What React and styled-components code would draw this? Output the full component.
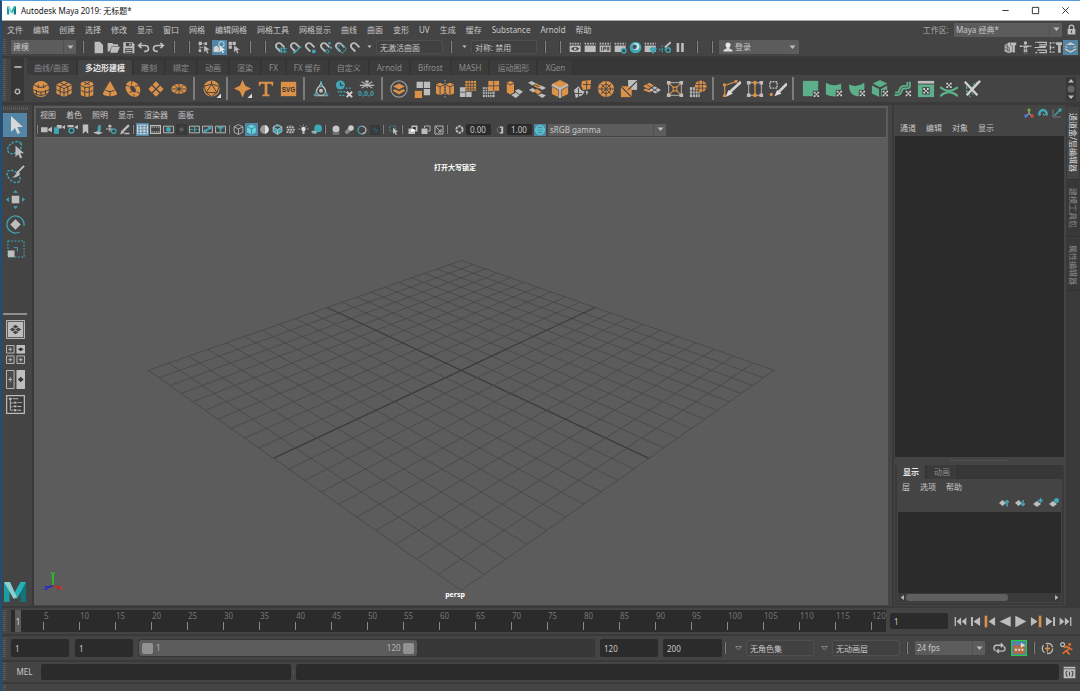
import React from "react";
import styled, { createGlobalStyle, css } from "styled-components";

const G = "#bdbdbd";
const T = "#3fa7b5";
const O = "#dc9148";
const N = "#5caf89";
const D = "#2b2b2b";
const BG = "#444444";
const BLUE = "#5285a6";

const GlobalStyle = createGlobalStyle`
  * { box-sizing: border-box; }
  body { margin: 0; background: ${BG}; }
  body, button, input, select {
    font-family: "Noto Sans", "Noto Sans CJK SC", sans-serif;
    font-size: 8px;
    line-height: 12px;
    color: #c8c8c8;
  }
  button { border: 0; padding: 0; margin: 0; background: none; cursor: default; }
  svg { display: block; }
`;

/* ---------- layout parts ---------- */

const Window = styled.div`
  min-height: 100vh;
  display: flex;
  flex-direction: column;
  background: ${BG};
  border-top: 1px solid #559fdd;
  border-left: 2px solid #1f4f78;
`;
const TitleBar = styled.header`
  display: flex;
  align-items: center;
  height: 20px;
  padding-left: 5px;
  background: #fff;
  border-bottom: 1px solid #a9a9a9;
`;
const Title = styled.h1`
  flex: 1;
  margin: 0 0 0 5px;
  font-size: 8px;
  line-height: 18px;
  font-weight: 400;
  color: #111;
`;
const WindowButton = styled.button`
  width: 30px;
  height: 18px;
  display: grid;
  place-items: center;
`;
const Bar = styled.div`
  display: flex;
  align-items: center;
  flex: none;
  height: ${(p) => p.$h}px;
  padding-right: ${(p) => p.$pr || 0}px;
  border-bottom: ${(p) => (p.$line ? "2px solid #3a3a3a" : "0")};
`;
const Spacer = styled.div`
  flex: 1;
`;
const MenuList = styled.nav`
  display: flex;
  gap: 10px;
  padding-left: ${(p) => p.$pl}px;
`;
const MenuButton = styled.button`
  white-space: nowrap;
`;
const Grip = styled.div`
  flex: none;
  align-self: center;
  width: 3px;
  height: ${(p) => p.$h || 18}px;
  margin: 0 5px 0 1px;
  background: repeating-linear-gradient(#5a5a5a 0 1px, transparent 1px 2px);
`;
const Group = styled.div`
  display: flex;
  align-items: center;
  flex: none;
  margin-left: ${(p) => p.$ml || 0}px;
`;
const Sep = styled.span`
  flex: none;
  width: 3px;
  height: ${(p) => p.$h || 12}px;
  margin-left: ${(p) => p.$ml || 0}px;
  border-left: 1px solid #3a3a3a;
  background: linear-gradient(90deg, #828282 50%, transparent 50%);
`;
const ShelfSep = styled.span`
  flex: none;
  width: 2px;
  height: 23px;
  margin: 0 3px;
  background: #7c7c7c;
`;
const IconButton = styled.button`
  flex: none;
  display: grid;
  place-items: center;
  width: ${(p) => p.$w || 15}px;
  height: ${(p) => p.$h || p.$w || 15}px;
  background: ${(p) => (p.$active ? BLUE : "none")};
  ${(p) => p.$outlined && css`border: 1px solid #1fd03f;`}
`;
const SelectBox = styled.div`
  display: flex;
  align-items: center;
  flex: none;
  width: ${(p) => p.$w}px;
  height: ${(p) => p.$h || 14}px;
  margin-left: ${(p) => p.$ml || 0}px;
  padding-left: 2px;
  background: #5c5c5c;
  border-radius: 1px;
  & > select {
    flex: 1;
    min-width: 0;
    appearance: none;
    border: 0;
    padding: 0;
    background: none;
    outline: 0;
  }
`;
const CaretCell = styled.span`
  display: grid;
  place-items: center;
  align-self: stretch;
  width: 13px;
  border-left: ${(p) => (p.$plain ? "0" : "1px solid #505050")};
`;
const Field = styled.input`
  flex: ${(p) => (p.$grow ? "1" : "none")};
  min-width: 0;
  width: ${(p) => p.$w}px;
  height: ${(p) => p.$h || 16}px;
  margin: 0 0 0 ${(p) => p.$ml || 0}px;
  padding: 0 3px;
  border: 1px solid ${(p) => (p.$flat ? "#4f4f4f" : D)};
  border-radius: 2px;
  background: ${(p) => (p.$flat ? "#414141" : D)};
  outline: 0;
`;
const Label = styled.label`
  color: #a8a8a8;
`;

/* ---------- shelf ---------- */

const Shelf = styled.section`
  display: flex;
  flex: none;
  height: 47px;
  border-bottom: 3px solid #3a3a3a;
`;
const ShelfSide = styled.div`
  display: flex;
  flex-direction: column;
  justify-content: space-between;
  align-items: center;
  width: 13px;
  height: 43px;
  padding: 5px 0 6px;
  margin-right: 3px;
  background: #373737;
`;
const ShelfBody = styled.div`
  flex: 1;
  min-width: 0;
`;
const TabStrip = styled.div`
  display: flex;
  height: ${(p) => p.$h}px;
  padding-top: ${(p) => p.$pt || 0}px;
  background: #373737;
`;
const Tab = styled.button`
  flex: none;
  padding: 0 ${(p) => (p.$tight ? 6 : 7)}px;
  margin-right: 1px;
  border-right: 1px solid #333;
  white-space: nowrap;
  color: ${(p) => (p.$active ? "#e6e6e6" : "#8c8c8c")};
  font-weight: ${(p) => (p.$active ? 700 : 400)};
  background: ${(p) => (p.$active ? BG : "#3b3b3b")};
`;
const ShelfRow = styled.div`
  display: flex;
  align-items: center;
  height: 27px;
`;
const ShelfScroll = styled.div`
  display: grid;
  place-items: center;
  width: 10px;
  height: 24px;
  margin-right: 4px;
  background: #383838;
`;

/* ---------- work area ---------- */

const Work = styled.main`
  display: flex;
  flex: 1;
  min-height: 0;
`;
const ToolBox = styled.aside`
  display: flex;
  flex-direction: column;
  align-items: center;
  width: 32px;
  padding: 2px 4px 3px 0;
  border-right: 2px solid #393939;
`;
const DotHandle = styled.div`
  flex: none;
  width: ${(p) => p.$w}px;
  height: ${(p) => p.$h}px;
  margin: ${(p) => p.$m || "0"};
  background: repeating-linear-gradient(90deg, #5c5c5c 0 1px, transparent 1px 2px);
`;
const ToolSet = styled.div`
  display: flex;
  flex-direction: column;
  align-items: center;
  margin-top: ${(p) => p.$mt}px;
`;
const Rule = styled.div`
  width: 24px;
  height: 2px;
  margin-top: 51px;
  background: #8f8f8f;
`;
const ViewPanel = styled.section`
  display: flex;
  flex-direction: column;
  flex: 1;
  min-width: 0;
  margin: 1px 4px 1px 0;
  border: 2px solid #5c5c5c;
  border-bottom-width: 1px;
`;
const Canvas = styled.div`
  position: relative;
  flex: 1;
  min-height: 0;
  background: #5c5c5c;
  border-top: 1px solid #666;
  overflow: hidden;
`;
const Scene = styled.svg`
  position: absolute;
  inset: 0;
  width: 100%;
  height: 100%;
`;
const Hud = styled.p`
  position: absolute;
  left: 0;
  right: 12px;
  ${(p) => p.$at}: ${(p) => p.$y}px;
  margin: 0;
  text-align: center;
  font-size: 7px;
  line-height: 10px;
  font-weight: 700;
  color: #fff;
`;
const SidePanel = styled.aside`
  display: flex;
  flex-direction: column;
  width: 174px;
  padding: 0 2px 0 1px;
  border-left: 2px solid #3a3a3a;
`;
const ChannelArea = styled.div`
  flex: 1;
  min-height: 0;
  background: ${D};
`;
const LayerBox = styled.div`
  display: flex;
  flex-direction: column;
  height: 140px;
  margin-bottom: 1px;
  border: 2px solid #3a3a3a;
  border-top: 0;
`;
const LayerList = styled.div`
  flex: 1;
  margin: 0 1px 0 1px;
  background: ${D};
`;
const ScrollBar = styled.div`
  display: flex;
  align-items: center;
  height: 9px;
  margin: 0 1px 1px 1px;
  padding: 0 1px;
  background: #3a3a3a;
`;
const ScrollThumb = styled.div`
  width: 102px;
  height: 7px;
  border-radius: 3px;
  background: #5f5f5f;
`;
const SideTabs = styled.div`
  display: flex;
  flex-direction: column;
  gap: 2px;
  width: 14px;
  padding: 2px 1px 0 1px;
  background: #3a3a3a;
`;
const SideTab = styled.button`
  writing-mode: vertical-rl;
  text-orientation: sideways;
  height: ${(p) => p.$h}px;
  padding: 6px 0;
  text-align: left;
  white-space: nowrap;
  color: ${(p) => (p.$active ? "#dcdcdc" : "#8c8c8c")};
  background: ${(p) => (p.$active ? BG : "#383838")};
  border-bottom: 1px solid #303030;
`;

/* ---------- bottom bars ---------- */

const Bottom = styled.footer`
  flex: none;
  display: flex;
  flex-direction: column;
  border-top: 2px solid #3a3a3a;
`;
const Track = styled.div`
  position: relative;
  display: flex;
  flex: 1;
  height: 22px;
  padding-left: 32px;
  background: ${D};
  overflow: hidden;
`;
const Tick = styled.div`
  flex: ${(p) => (p.$last ? "none" : "1")};
  width: ${(p) => (p.$last ? "15px" : "auto")};
  min-width: 0;
  color: #747474;
  line-height: 11px;
  padding-left: 1px;
  background: linear-gradient(#8a8a8a, #8a8a8a) 0 100% / 1px 8px no-repeat;
  border-bottom: 2px solid ${D};
`;
const Playhead = styled.output`
  position: absolute;
  left: 4px;
  top: 0;
  width: 6px;
  height: 22px;
  line-height: 24px;
  text-align: center;
  color: #d8d8d8;
  background: #5a5a5a;
`;
const RangeTrack = styled.div`
  display: flex;
  flex: 1;
  height: 18px;
  margin-left: 5px;
  padding: 1px;
  background: #373737;
  border-radius: 2px;
`;
const RangeSpan = styled.div`
  position: relative;
  display: flex;
  align-items: center;
  justify-content: space-between;
  width: 61%;
  padding: 0 16px 0 17px;
  border-radius: 3px;
  background: #5c5c5c;
  color: #b4b4b4;
`;
const thumb = css`
  appearance: none;
  pointer-events: auto;
  width: 11px;
  height: 11px;
  border: 0;
  border-radius: 2px;
  background: #929292;
`;
const RangeInput = styled.input`
  position: absolute;
  inset: 0 3px;
  width: calc(100% - 6px);
  height: 16px;
  margin: 0;
  appearance: none;
  background: none;
  pointer-events: none;
  &::-webkit-slider-thumb { ${thumb} }
`;
const Mel = styled.button`
  width: 30px;
  padding-right: 3px;
  text-align: center;
`;
const CommandDivider = styled.div`
  width: 5px;
  height: 6px;
  border-right: 2px solid ${BG};
  background: #555;
  border-left: 2px solid ${BG};
`;

/* ---------- drawings ---------- */

const checker = (x, y) => (
  <g>
    <path fill="#404040" d={`M${x - 1} ${y - 1}h8v8h-8z`} />
    <path fill="#d8d8d8" d={`M${x} ${y}h2v2h-2zM${x + 4} ${y}h2v2h-2zM${x + 2} ${y + 2}h2v2h-2zM${x} ${y + 4}h2v2h-2zM${x + 4} ${y + 4}h2v2h-2z`} />
  </g>
);
const clapper = (
  <>
    <path fill={G} d="M1 7h17v10H1z" />
    <path fill="none" stroke={G} strokeWidth="2.600" strokeDasharray="2.400 1.600" d="M1 4h17" />
  </>
);
const magnet = (
  <path
    fill="none"
    stroke={G}
    strokeWidth="2.800"
    transform="rotate(-45 8 8)"
    d="M3.500 15V7.500a4.500 4.500 0 019 0V15"
  />
);
const screen = <path fill="none" stroke={G} strokeWidth="1.700" d="M1 4h18v12H1z" />;
const pointer = <path fill={G} stroke="#3a3a3a" strokeWidth=".6" d="M9 6v12l3-3 2 4.500 2.500-1-2-4.500H19z" />;

const DRAW = {
  newFile: <path fill={G} d="M4 1h8l5 5v13H4z" />,
  open: <path fill={G} d="M1 3h7l2 2h7v3H7l-3 8H1zM7 9h13l-4 9H5z" />,
  save: (
    <>
      <path fill={G} d="M2 2h14l3 3v14H2z" />
      <path fill={BG} d="M6 3h9v5H6zM5 11h11v7H5z" />
      <path fill={G} d="M6 12.500h9v1.500H6zM6 15.500h9V17H6zM11 4h2.500v3H11z" />
    </>
  ),
  undo: <path fill="none" stroke={G} strokeWidth="2.400" d="M7 3L2.500 7l4.500 4M3 7h9c7 0 8 8 1 9h-2" />,
  redo: <path fill="none" stroke={G} strokeWidth="2.400" d="M13 3l4.500 4-4.500 4M17 7H8c-7 0-8 8-1 9h2" />,
  selHier: (
    <>
      <path fill={G} d="M1 1h5v5H1zM1 13h4v4H1zM10 2h4v4h-4z" />
      <path fill="none" stroke={G} d="M3 6v8M6 4h4M3 10h5" />
      {pointer}
    </>
  ),
  selObj: (
    <>
      <path fill="#d5d5d5" d="M1 10l4-3 4 3v7H1z" />
      <circle cx="13" cy="5" r="4" fill="none" stroke="#9fc4d4" strokeWidth="2" />
      <path fill="#e6e6e6" d="M10 7v11l3-3 2 4 2-1-2-4h4z" />
    </>
  ),
  selComp: (
    <>
      <path fill={G} d="M1 1h5v5H1zM7 1h5v5H7zM1 7h5v5H1z" />
      {pointer}
    </>
  ),
  magGrid: <>{magnet}<path stroke={T} strokeWidth="1.500" d="M11.500 9v10M16 9v10M8 12h12M8 16.500h12" /></>,
  magCurve: <>{magnet}<path fill="none" stroke={T} strokeWidth="2.200" d="M6 18c8 0 5-7 13-9" /></>,
  magPoint: <>{magnet}<circle cx="15" cy="16" r="3" fill={T} /></>,
  magCenter: <>{magnet}<circle cx="13" cy="16" r="2.500" fill="none" stroke={T} strokeWidth="1.500" /><path fill={T} d="M14 2h4v3h-4zM17 9h3v3h-3z" /></>,
  magPlane: <>{magnet}<path fill="none" stroke={T} strokeWidth="1.500" d="M4 11l7-7 8 8-6 7z" /></>,
  magLive: magnet,
  clapEye: <>{clapper}<path fill={BG} d="M3 12q6.500-6 13 0-6.500 6-13 0z" /><circle cx="9.500" cy="12" r="2" fill={G} /></>,
  clap: clapper,
  clapIpr: <>{clapper}<path fill="none" stroke={BG} strokeWidth="1.400" d="M4 9v6M7 15V9.500h3v2.500H7M12.500 15V9.500h3V12h-3M14 12l1.500 3" /></>,
  clapGear: <>{clapper}<circle cx="15" cy="15" r="3.500" fill={BG} stroke={T} strokeWidth="2.200" /></>,
  ball: <><circle cx="10" cy="10" r="9" fill={T} /><circle cx="10.500" cy="8.500" r="5.500" fill="#c9dfe3" /><circle cx="8.500" cy="9" r="3.500" fill="#325a66" /></>,
  clapTeal: <>{clapper}<path fill={T} d="M8 12l6-3 6 3-6 8z" /></>,
  paintGear: <><path stroke={G} strokeWidth="3" d="M9 10l9-8" /><path stroke={T} strokeWidth="2.200" strokeDasharray="2 2" d="M0 13h9M5 7v12" /><circle cx="14" cy="14" r="3.500" fill="none" stroke={T} strokeWidth="2.200" /></>,
  pause: <path fill={G} d="M4 3h4v14H4zM11 3h4v14h-4z" />,
  user: <><circle cx="10" cy="6" r="5" fill="#e8e8e8" /><path fill="#dcdcdc" d="M7 10h6v3l6 3v3H1v-3l6-3z" /></>,
  lock: <><path fill="none" stroke={G} strokeWidth="2.500" d="M6 9V6a4 4 0 018 0v3" /><path fill={G} d="M3 9h14v10H3z" /><path fill={BG} d="M9 12h2v4H9z" /></>,
  cubePlus: <><path fill={G} d="M1 6l7-4 6 2v12l-6 3-7-3z" /><path stroke={BG} d="M1 7l7 3v8M5 4v12M1 11.500l7 3" fill="none" /><path fill={G} stroke={BG} strokeWidth=".7" d="M10 2h9v5h-2v11h-4V7h-3z" /></>,
  human: <><circle cx="10" cy="3" r="2.600" fill={G} /><path fill="none" stroke={G} strokeWidth="2.400" d="M1 8h18M8.500 7v12M11.500 7v12" strokeDasharray="4.500 1" /></>,
  attrs: <path fill="none" stroke={G} strokeWidth="1.800" d="M5 2h14v4H8M1 10h17M8 8.500h11M5 14h14v4H8M2 2h2M2 18h3" />,
  toolset: <><path fill="none" stroke={G} strokeWidth="2" strokeDasharray="3 1.500" d="M1 3h10M1 10h8M1 17h8M2 2v16" /><path fill={G} d="M11 2h9v4h-2v12h-4V6h-3z" /></>,
  layersOn: <path fill="#c2c8cc" stroke="#4c6f85" d="M10 1l9 5v8l-9 5-9-5V6zM1 6l9 5 9-5M1 10l9 5 9-5" />,

  minus: <path fill={G} d="M1 8h18v4H1z" />,
  gear: <circle cx="10" cy="10" r="6.500" fill="none" stroke={G} strokeWidth="4.500" strokeDasharray="6 .8" />,
  sphere: <><circle cx="10" cy="10" r="9" fill={O} /><path fill="none" stroke={BG} strokeWidth="1.100" d="M2.500 5.500q7.500 5.500 15 0M1 10.500q9 6 18 0M3 15q7 4 14 0M7 5v4M13 5v4M5 11v5M10 13v4M15 11v5" /></>,
  cube: <><path fill={O} d="M10 1l8.500 4v10L10 19l-8.500-4V5z" /><path fill="none" stroke={BG} strokeWidth="1.100" d="M1.500 5.500l8.500 4 8.500-4M10 9.500V19M1.500 10.500l8.500 4 8.500-4M5.800 3l8.500 4.300v10M14.200 3L5.700 7.300v10" /></>,
  cylinder: <><path fill={O} d="M3 4.500C3 .5 17 .5 17 4.500v11c0 4-14 4-14 0z" /><path fill="none" stroke={BG} strokeWidth="1.100" d="M3 5.500c2 3.500 12 3.500 14 0M3 11c2 3.500 12 3.500 14 0M7.500 8v11M12.500 8v11M7 2.500l6 3M13 2.500l-6 3" /></>,
  cone: <><path fill={O} d="M10 1l8 14c-1 4-15 4-16 0z" /><path fill="none" stroke={BG} strokeWidth="1.100" d="M5 11.500q5 3 10 0M10 12.500v6.500" /></>,
  torus: <><ellipse cx="10" cy="10" rx="5" ry="7" transform="rotate(-35 10 10)" fill="none" stroke={O} strokeWidth="5" /><path stroke={BG} strokeWidth="1" d="M2 6l4 1M6 14l4-2M9 1l-1 4M12 7l5-1M14 13l4 2M11 16v3" /></>,
  plane: <><path fill={O} d="M10 1.500l8.500 8.500-8.500 8.500L1.500 10z" /><path stroke={BG} strokeWidth="1.400" d="M5.500 5.500l9 9M14.500 5.500l-9 9" /></>,
  disc: <><ellipse cx="10" cy="10" rx="8.500" ry="5.500" fill={O} /><path stroke={BG} strokeWidth="1" d="M5 6l10 8M15 6L5 14M10 4v12M2 10h16" /><circle cx="10" cy="10" r="1.500" fill={BG} /></>,
  platonic: <><circle cx="9.500" cy="9.500" r="9" fill={O} /><path fill="none" stroke={BG} strokeWidth="1.100" d="M9.500 1v3.500M3.500 14L9.500 4.500 15.500 14zM3.500 14L1 7l8.500-2.500L18 7l-2.500 7M3.500 14l6 4.500 6-4.500" /><path fill="#ddd" d="M20 15v5h-5z" /></>,
  star: <><path fill={O} d="M9.500 0l3 6.500L19 9.500l-6.500 3-3 7-3-7L0 9.500l6.500-3z" /><path fill="#ddd" d="M20 15v5h-5z" /></>,
  type: <path fill={O} d="M2 2h16v4.500h-1.500l-.8-2.300H11.500v11.600l2.500.6V18H6v-1.600l2.500-.6V4.200H4.300L3.500 6.500H2z" />,
  svgIcon: <path fill={O} d="M1 2h17v16H1z" />,
  ctrl: <><circle cx="10" cy="12" r="5" fill="none" stroke={G} strokeWidth="1.300" /><circle cx="10" cy="12" r="2.200" fill={G} /><path stroke={T} strokeWidth="1.700" fill="none" d="M10 1v7M6 14l-4 3M14 14l4 3" /><path stroke={G} fill="none" d="M3 17.500h14M10 3L4 14M10 3l6 11" /></>,
  history: <><circle cx="6" cy="5.500" r="5" fill={T} /><path stroke={BG} strokeWidth="1.200" fill="none" d="M6 2.500v3.500h3" /><path stroke={T} strokeWidth="1.500" strokeDasharray="2 1.500" d="M12 9h7M6 13h6M3 13h2M5 17h6" /><path stroke="#d0d0d0" strokeWidth="2.200" d="M13 13l6 6M19 13l-6 6" /></>,
  freeze: <path stroke={G} strokeWidth="1.200" fill="none" d="M10 0v9M4 2l12 7M16 2L4 9M2 6h16M8 1l2 2 2-2" />,
  combineC: <><circle cx="10" cy="10" r="9" fill="none" stroke="#999" strokeWidth="1.300" /><path fill={O} d="M10 4l6.500 3.200L10 10.500 3.500 7.200z" /><path fill={O} d="M3.500 11l2-.8L10 12.400l4.500-2.200 2 .8v1.200L10 16l-6.500-3.800z" /></>,
  combine: <><path fill={G} d="M4 2h7v7H4zM12 2h7v7h-7zM12 10h7v7h-7z" /><path fill={O} d="M2 12h8v8H2z" /></>,
  mirror: <><path fill={O} d="M0 5l4.500-2L9 5v10l-4.500 2L0 15zM11 5l4.500-2L20 5v10l-4.500 2-4.500-2z" /><path stroke={BG} fill="none" d="M0 5.500l4.500 2 4.500-2M4.500 7.500V17M11 5.500l4.500 2 4.500-2M15.500 7.500V17" /><path stroke={G} strokeDasharray="1.500 1.500" d="M10 0v20" /></>,
  smooth: <><path fill={G} d="M1 8h6v5h7v6H1z" /><path fill={O} d="M7 1h12v11H7z" /><path stroke={BG} strokeWidth=".8" d="M1 13.500h6M7.500 13v6M10 1v11M13 1v11M16 1v11M7 4h12M7 7h12M7 10h12" /></>,
  reduce: <><path fill={G} d="M1 8h13v11H1z" /><path fill={O} d="M7 1h12v11H7z" /><path stroke={BG} strokeWidth=".9" d="M3.500 8v11M6 8v11M8.500 12v7M11 12v7M1 10.500h6M1 13h13M1 16h13M13 1v11M7 6.500h12" /></>,
  extrude: <><path fill={O} d="M2 3l4-2 4 2v11l-4 2-4-2z" /><path fill="none" stroke={BG} d="M2 3.500l4 2 4-2" /><path fill={G} d="M7 17l5-3 4 3-4 3zM11 12l4-2 5 3-4 3z" /></>,
  bridge: <><path fill={G} d="M0 3l4-2 5 3-4 2zM11 8l4-2 5 3-4 2zM1 11l4-2 5 3-4 2zM11 17l4-2 5 2-4 3z" /><path fill={O} d="M6 12l4-2 5 3-4 3z" /><path fill="none" stroke={O} strokeWidth="1.500" d="M8 4l6 3M7 6l5 3" /></>,
  bevel: <><path fill={O} d="M10 0l9 4.500v11L10 20l-9-4.500v-11z" /><path fill="none" stroke={G} strokeWidth="2.600" d="M1 5.500l9 4.500 9-4.500M10 10v10" /><path fill="none" stroke={BG} strokeWidth=".7" d="M1 7l7.500 4v8M19 7l-7.500 4v8" /></>,
  scatter: <><path fill={O} d="M9 1l10-1-1 10-8 1-2-5z" /><path fill={G} d="M0 11l5-4 3 4 4 2-3 4-7 3zM13 12l3 1-2 4z" /><path stroke={BG} d="M1 15h8M5 9v10M10 5h8M14 1v9" /></>,
  wheel: <><circle cx="10" cy="10" r="9" fill={O} /><circle cx="10" cy="10" r="5" fill="none" stroke={BG} /><path stroke={BG} d="M10 1v18M1 10h18M4 4l12 12M16 4L4 16" /></>,
  diag: <><path fill={G} d="M9 0h10v11H9z" /><path fill={O} d="M1 7h12v12H1z" /><path stroke={BG} strokeWidth="1.300" d="M1 7l12 12M9 11L19 1" /></>,
  merge: <><path fill={O} d="M0 7l7-4 5 3-6 4zM0 11l3-1.500 4 2 3-1.500 2 1-5 3z" /><path fill={G} d="M7 11l6-4 7 4-6 4z" /><path stroke={BG} d="M4 5l6 4M10 13l6-4M10 9l6 4" /></>,
  target: <><path stroke={G} fill="none" d="M3 3h14v14H3z" /><path fill={G} d="M1 1h4v4H1zM15 1h4v4h-4zM1 15h4v4H1zM15 15h4v4h-4z" /><path stroke={O} strokeWidth="1.200" d="M4 4l12 12M16 4L4 16" /><path fill={BG} stroke={O} strokeWidth="1.300" d="M8 8h4v4H8z" /></>,
  retopo: <><path fill={G} d="M1 8h11v11H1z" /><circle cx="13" cy="7" r="6.500" fill={O} /><path stroke={BG} strokeWidth=".9" d="M4 8v11M7 8v11M10 12v7M1 12h10M1 15.500h11M11 1v12M15 1v12M7 5h12M7 9h12" /></>,
  multicut: <><path fill="none" stroke={O} strokeWidth="1.300" d="M2 18V6l12-4" /><path fill={O} d="M0 4h3v3H0zM13 0h3v3h-3zM0 16h3v3H0z" /><path stroke="#d0d0d0" strokeWidth="3" d="M8 13L20 2" /><path fill="#ddd" d="M3 19l3-8 5 4z" /></>,
  loop: <><path fill="none" stroke={G} d="M3 3h14v14H3z" /><path fill={G} d="M1 1h4v4H1zM15 1h4v4h-4zM1 15h4v4H1zM15 15h4v4h-4z" /><path stroke={O} strokeWidth="1.500" d="M10 2v16" /><circle cx="10" cy="3" r="2.300" fill={O} /><circle cx="10" cy="17" r="2.300" fill={O} /></>,
  quad: <><path fill="none" stroke={G} strokeWidth="1.600" strokeDasharray="2 1" d="M1 2h8v7H1z" /><path stroke="#d0d0d0" strokeWidth="3" d="M11 13L20 4" /><path fill="#ddd" d="M6 18l3-7 5 4z" /><circle cx="2.500" cy="16" r="1.800" fill={O} /></>,
  uvPlane: <><path fill={N} d="M1 1h17v17H1z" />{checker(13, 13)}</>,
  uvCyl: <><path fill={N} d="M1 3q9 5 17 1v13q-8 3-17-1z" />{checker(13, 12)}</>,
  uvSph: <><path fill={N} d="M1 5q9 4 17-2 2 14-8 15-9-1-9-13z" />{checker(13, 12)}</>,
  uvAuto: <><path fill={N} d="M10 0l8 4-8 4-8-4zM1 6l8 4v9l-8-4zM11 10l7-4v9l-7 4z" />{checker(13, 12)}</>,
  uvContour: <><path fill="none" stroke={N} strokeWidth="5" d="M1 15c9 2 4-7 10-7s6 0 5-6" /><path fill="none" stroke={BG} strokeWidth=".9" d="M1 15c9 2 4-7 10-7s6 0 5-6" />{checker(13, 12)}</>,
  uvEditor: <><path fill={G} d="M1 1h18v3H1z" /><path fill={N} d="M1 5h18v14H1z" />{checker(7, 9)}</>,
  uvUnfold: <><path fill="none" stroke={N} strokeWidth="2.400" d="M0 8q10 8 20 0M0 18q10-9 20 0" />{checker(7, 3)}</>,
  uvCut: <><path fill="none" stroke={N} strokeWidth="1.500" d="M4 3v9l4 7M17 2q-10 4-6 14" strokeDasharray="3 1" /><path stroke="#d0d0d0" strokeWidth="2.600" d="M2 2l14 15M19 1L4 17" /></>,
  scroll: <><path fill={G} d="M10 0l6 7H4zM10 40l6-7H4z" /><circle cx="10" cy="20" r="7" fill="#666" /></>,

  arrow: <path fill="#d8d8d8" d="M6 1v16l4-4 2.500 6 2.500-1-2.500-6H18z" />,
  lasso: <><ellipse cx="9" cy="8" rx="8" ry="5.500" transform="rotate(-35 9 8)" fill="none" stroke={T} strokeWidth="1.500" strokeDasharray="2.500 1.500" /><path fill={G} d="M10 6v12l3-3 2 4.500 2-1-2-4.500h4z" /></>,
  paint: <><ellipse cx="8" cy="12" rx="8" ry="5" transform="rotate(42 8 12)" fill="none" stroke={T} strokeWidth="1.500" strokeDasharray="2.500 1.500" /><path stroke={G} strokeWidth="2" d="M12 8l7-7" /><path fill={G} d="M12 6l3 3q-3 5-9 4 4-1 6-7z" /></>,
  move: <><path fill={G} d="M6 6h8v8H6z" /><path fill={T} d="M10 0l2.500 3h-5zM10 20l2.500-3h-5zM0 10l3-2.500v5zM20 10l-3-2.500v5z" /></>,
  rotate: <><circle cx="10" cy="10" r="9" fill="none" stroke={T} strokeWidth="1.300" strokeDasharray="14 8 35" transform="rotate(-80 10 10)" /><path fill={G} d="M10 4.500l5.500 5.500-5.500 5.500L4.500 10z" /></>,
  scale: <><path fill="none" stroke={T} strokeWidth="1.100" strokeDasharray="2 1.500" d="M2 1h17v17H2z" /><path fill="none" stroke={T} d="M8 8h4v4" /><path fill={G} d="M2 11h7v7H2z" /></>,
  single: <><path fill="#555" stroke={G} d="M.5.5h19v19H.5z" /><path fill={G} d="M2 2h16v16H2z" /><path fill="#444" d="M10 5l3 2-3 2-3-2zM10 11l3 2-3 2-3-2zM4 10l3-2 3 2-3 2zM10 10l3-2 3 2-3 2z" /></>,
  four: <><path fill="#4a4a4a" stroke={G} d="M.5.500h8v8h-8zM11.500 11.500h8v8h-8zM.5 11.500h8v8h-8z" /><path fill={G} d="M11 0h9v9h-9z" /><path stroke={G} d="M4.500 2.500v4M2.500 4.500h4M4.500 13.500v4M2.500 15.500h4M15.500 13.500v4M13.500 15.500h4" /><path fill="#333" d="M15.500 2.500l3 2-3 2-3-2z" /></>,
  two: <><path fill="#4a4a4a" stroke={G} d="M.5.500h8v19h-8z" /><path fill={G} d="M11 0h9v20h-9z" /><path stroke={G} d="M4.500 7.500v5M2.500 10h4" /><path fill="#333" d="M15.500 7l3 3-3 3-3-3z" /></>,
  outliner: <><path fill="#3a3a3a" stroke={G} strokeWidth="1.300" d="M.7.700h18.600v18.600H.7z" /><path fill={G} d="M3 3h3v2H3zM7 3.500h6v1H7zM8 7h3v2H8zM12 7.500h5v1h-5zM8 11h3v2H8zM12 11.500h4v1h-4zM8 15h3v2H8zM12 15.500h4v1h-4zM4 5h1v11H4zM5 8h2v1H5zM5 12h2v1H5zM5 15.500h2v1H5z" /></>,
  mayaM: <><path fill="#1d9ea5" d="M0 1h5v18H0z" /><path fill="#11767c" d="M15 1h5v18h-5z" /><path fill="#27b0b5" d="M20 1h-5L8.500 12.500l2 3.500h1.500z" /><path fill="#8ccdd3" d="M0 1h5.500l6 13-1.500 2H8.500z" /></>,

  cam: <path fill={G} d="M0 6h12v9H0zM13 9l7-4v10l-7-3z" />,
  camLock: <><path fill={G} d="M5 2h9v6H5zM15 5l5-3v7l-5-2z" /><path fill={T} d="M0 6h9v12H0z" /></>,
  camBook: <><path fill={G} d="M1 2h11v4H1zM14 5l6-3v7l-6-2z" /><circle cx="8" cy="12" r="4.500" fill="none" stroke={T} strokeWidth="2.500" /></>,
  bookmark: <path fill={G} d="M5 1h10v17l-5-5-5 5z" />,
  imagePlane: <><path fill={T} d="M9 3l5-2v12l-6 4z" /><path fill={G} d="M0 16l8-3 10 3-8 3z" /></>,
  panZoom: <><path stroke={G} strokeWidth="2" fill="none" d="M0 9h12M7 2v12M4 5l3-3 3 3" /><circle cx="14" cy="13" r="4" fill="none" stroke={T} strokeWidth="2.200" /></>,
  pencil: <><path stroke={G} strokeWidth="4" d="M7 13L18 2" /><path fill={G} d="M2 19l3-8 5 5zM10 16h9v2.500h-9z" /></>,
  grid: <path fill="none" stroke="#e0e0e0" strokeWidth="1.600" d="M1 2h18v16H1zM7 2v16M13 2v16M1 7.300h18M1 12.700h18" />,
  film: <><path fill="none" stroke={G} strokeWidth="2" d="M1 3h18v14H1z" /><path stroke={G} strokeWidth="1.500" strokeDasharray="2 2" d="M3 6h14M3 14h14" /></>,
  gateDot: <>{screen}<circle cx="10" cy="10" r="4.500" fill={T} /></>,
  mask: <><path fill="#3a3a3a" d="M0 0h20v20H0z" /><circle cx="10" cy="10" r="4" fill="#5a5a5a" /></>,
  field: <>{screen}<path stroke={T} strokeWidth="2.200" strokeDasharray="5 2" d="M2 10h16M10 4v12" /></>,
  safe: <>{screen}<path fill={T} d="M3 10h6v5H3zM11 5h6v5h-6zM8 8h4v4H8z" /></>,
  safeT: <>{screen}<path fill={T} d="M5 5h10v3h-3.500v7h-3V8H5z" /></>,
  wire: <path fill="none" stroke={G} strokeWidth="1.500" d="M10 1l8 4v10l-8 4-8-4V5zM2 5l8 4 8-4M10 9v10" />,
  shaded: <><path fill="#63d3dc" d="M10 1l8 4v10l-8 4-8-4V5z" /><path fill="none" stroke="#2f7080" strokeWidth="1.300" d="M2 5l8 4 8-4M10 9v10" /></>,
  half: <><path fill="#ddd" d="M10 2a8 8 0 010 16z" /><path fill="#999" d="M10 2a8 8 0 000 16z" /></>,
  textured: <path fill={T} stroke={G} strokeWidth="1.500" d="M10 1l8 4v9l-8 5-8-5V5zM2 5l8 5 8-5M10 10v9" />,
  dots: <><circle cx="10" cy="10" r="8" fill="#666" /><path stroke="#d0d0d0" strokeWidth="2.500" strokeDasharray="2.500 2.500" d="M3 6h14M5 10.500h13M3 15h14" /></>,
  light: <><circle cx="10" cy="9" r="4" fill="#ddd" /><path fill={G} d="M8 13h4v5H8z" /><path stroke={G} strokeWidth="1.500" d="M10 1v2M1 9h3M16 9h3M4 3l2 2M16 3l-2 2" /></>,
  shadow: <><circle cx="13" cy="8" r="7" fill={T} /><path fill="#8fb0b5" d="M0 14q6-4 11 0l-2 4q-6 0-9-4z" /></>,
  ao: <><circle cx="10" cy="8" r="7" fill="#c5c5c5" /><ellipse cx="10" cy="17" rx="8" ry="2.500" fill="#777" /></>,
  blurIcon: <><path fill="#858585" d="M1 14l8-9 6 6-9 8z" /><circle cx="14" cy="6" r="5.500" fill="#ccc" /></>,
  msaa: <><path fill="none" stroke={T} strokeWidth="2.500" d="M10 2a8 8 0 100 16" /><path fill="none" stroke={G} strokeWidth="2.500" d="M10 2q8 2 8 8t-8 8" /></>,
  dof: <><path fill="#383838" d="M0 0h20v20H0z" /><path fill="#2f4f56" d="M5 5h7v5H5zM9 8h7v8H9z" /></>,
  isolate: <><path fill="none" stroke={T} strokeWidth="1.700" strokeDasharray="2 2" d="M1 2h12v10H1z" /><path fill={G} d="M8 5v13l3-3 2.500 5 2.500-1-2.500-5H18z" /></>,
  xray: <><path fill={G} d="M7 1h12v12h-5v5H1V7h6z" /><path fill="#333" d="M9.500 4h6v6h-6z" /><path fill="#fff" d="M6 8h7v5H6z" /></>,
  xray2: <><path fill="none" stroke={G} strokeWidth="1.700" d="M7 6V2h11v10h-4" /><path fill={G} d="M1 7h12v11H1z" /></>,
  xray3: <path fill="none" stroke={G} strokeWidth="1.900" d="M2 2h16v16H2zM4 4l10 10M14 8v6H8" />,
  exposure: <circle cx="10" cy="10" r="7" fill="none" stroke={G} strokeWidth="4.500" strokeDasharray="5.500 1.800" />,
  gamma: <><path fill="none" stroke={G} strokeWidth="1.700" strokeDasharray="3 2" d="M11 2a8 8 0 000 16" /><path fill={G} d="M10 1h8v18h-8v-4h3V5h-3z" /></>,
  colorMgmt: <><path fill={BLUE} d="M0 0h20v20H0z" /><circle cx="10" cy="10" r="7" fill="none" stroke="#55cfd0" strokeWidth="2.500" /><path stroke="#55cfd0" strokeWidth="2" d="M4 8h12M4 12h12" /></>,

  axis: <><path stroke={G} strokeWidth="2" d="M10 5v6l-6 5M10 11l6 5" fill="none" /><circle cx="10" cy="4" r="3.500" fill="#6fa83c" /><circle cx="4" cy="16" r="3.500" fill="#4c7be0" /><circle cx="16" cy="16" r="3.500" fill="#d0504a" /></>,
  speed: <><path fill="none" stroke={T} strokeWidth="5" d="M4 15a7 7 0 1112 0" /><path stroke={G} strokeWidth="2" d="M10 11l3 4" /></>,
  graph: <><path fill="none" stroke="#888" strokeWidth="1.500" d="M2 2v16h16" /><path stroke={T} strokeWidth="2.500" d="M5 15L16 4" /><path fill={T} d="M13 1h6v6h-6z" /></>,
  layerUp: <><path fill={G} d="M0 10l7-6 7 6-7 6z" /><path stroke={T} strokeWidth="3" fill="none" d="M16 17V6M12 9l4-4 4 4" /></>,
  layerDown: <><path fill={G} d="M0 10l7-6 7 6-7 6z" /><path stroke={T} strokeWidth="3" fill="none" d="M16 4v10M12 11l4 4 4-4" /></>,
  layerNew: <><path fill={G} d="M0 12l8-6 8 6-8 6z" /><path stroke={T} strokeWidth="3" d="M15 0v10M10 5h10" /></>,
  layerSel: <><path fill={G} d="M0 12l8-6 8 6-8 6z" /><circle cx="15" cy="5" r="5" fill={T} /></>,
  triL: <path fill={G} d="M14 3v14L5 10z" />,
  triR: <path fill={G} d="M6 3v14l9-7z" />,

  first: <path fill={G} d="M1 3h2v14H1zM11 4v12l-7-6zM19 4v12l-7-6z" />,
  prevKey: <path fill={G} d="M3 3h3v14H3zM17 3v14L7 10z" />,
  prevFrame: <><path fill={O} d="M1 1h4v18H1z" /><path fill={G} d="M17 3v14L7 10z" /></>,
  playBack: <path fill={G} d="M18 2v16L1 10z" />,
  play: <path fill={G} d="M2 1v18l17-9z" />,
  nextFrame: <><path fill={O} d="M15 1h4v18h-4z" /><path fill={G} d="M3 3v14l10-7z" /></>,
  nextKey: <path fill={G} d="M14 3h3v14h-3zM3 3v14l10-7z" />,
  last: <path fill={G} d="M17 3h2v14h-2zM9 4v12l7-6zM1 4v12l7-6z" />,
  loopPlay: <path fill="none" stroke={G} strokeWidth="2.200" d="M4 13c-4-1-3-8 1-8h10M12 2l3 3-3 3M16 7c4 1 3 7-1 7H6M9 11l-3 3 3 3" />,
  cache: <><path fill="#b86a3a" d="M1 5h17v13H1z" /><path stroke="#ddd" strokeWidth="3" strokeDasharray="3 2" d="M3 12h13" /><path fill="#ddd" d="M12 1l7 4-7 4z" /></>,
  autoKey: <><circle cx="10" cy="10" r="8" fill="none" stroke={G} strokeWidth="2" strokeDasharray="13 4" /><path stroke={O} strokeWidth="2" d="M10 4v12M6 10h8" /></>,
  runner: <><circle cx="4" cy="4" r="3" fill="none" stroke={G} strokeWidth="1.800" /><circle cx="15" cy="4" r="2.300" fill="#e07030" /><path fill="none" stroke="#e07030" strokeWidth="2.600" d="M6 9l4-2 4 2-4 5 5 5M10 13l-6 5M13 9l6 3" /></>,
  script: <><path fill={G} d="M1 1h18v3H1zM1 5h18v14H1z" /><path stroke="#444" strokeWidth="1.700" fill="none" d="M7 8q-3 0-2 4 0 4 2 4M13 8q3 0 2 4 0 4-2 4M10 9v6" /></>,
  min: <path stroke="#222" strokeWidth="2" d="M3 10h14" />,
  max: <path fill="none" stroke="#222" strokeWidth="2" d="M3 3h14v14H3z" />,
  close: <path stroke="#222" strokeWidth="2" d="M3 3l14 14M17 3L3 17" />,
};

const SvgCaption = styled.text`
  font: 700 ${(p) => p.$s}px "Liberation Sans", sans-serif;
  fill: ${(p) => p.$c};
`;
const CAPTIONS = {
  svgIcon: { x: 2, y: 13, s: 7, c: "#333", t: "SVG" },
  freeze: { x: 0, y: 18, s: 8, c: T, t: "0,0,0" },
};

const Icon = ({ name, size = 12, box = "0 0 20 20", h }) => {
  const cap = CAPTIONS[name];
  return (
    <svg width={size} height={h || size} viewBox={box} aria-hidden="true">
      {DRAW[name]}
      {cap && <SvgCaption x={cap.x} y={cap.y} $s={cap.s} $c={cap.c}>{cap.t}</SvgCaption>}
    </svg>
  );
};

const Caret = ({ hollow, small }) => (
  <svg width={small ? 5 : 7} height={small ? 4 : 5} viewBox="0 0 7 5" aria-hidden="true">
    <path
      d="M0.500 0.500h6L3.500 4z"
      fill={hollow ? "none" : G}
      stroke={hollow ? "#808080" : "none"}
    />
  </svg>
);

const Tools = ({ names, w = 15, h, size = 13, ml, active, outlined }) => (
  <Group $ml={ml}>
    {names.map((n) => (
      <IconButton key={n} type="button" aria-label={n} $w={w} $h={h} $active={active === n} $outlined={outlined}>
        <Icon name={n} size={size} />
      </IconButton>
    ))}
  </Group>
);

const Choice = ({ id, label, value, plain, children, ...box }) => (
  <SelectBox {...box}>
    {children}
    <select id={id} aria-label={label} defaultValue={value}>
      <option>{value}</option>
    </select>
    <CaretCell $plain={plain}><Caret /></CaretCell>
  </SelectBox>
);

const Menus = ({ items, pl }) => (
  <MenuList $pl={pl}>
    {items.map((m) => <MenuButton key={m} type="button">{m}</MenuButton>)}
  </MenuList>
);

/* ---------- perspective grid ---------- */

const project = (u, v) => {
  const s = u + v;
  const w = 1 - 0.16707 * s;
  const x = 425.7 + (156.6 * (u - v)) / w;
  const y = (370.3 + 11.5 * s) / w - 138;
  return [x.toFixed(1), y.toFixed(1)];
};
const GroundGrid = () => {
  const lines = [];
  for (let i = -10; i <= 10; i += 1) {
    const t = i / 10;
    [[project(t, -1), project(t, 1)], [project(-1, t), project(1, t)]].forEach(([a, b], k) => {
      lines.push(
        <line
          key={`${i}-${k}`}
          x1={a[0]} y1={a[1]} x2={b[0]} y2={b[1]}
          stroke={i === 0 ? "#3c3c3c" : "#464646"}
          strokeWidth={i === 0 ? 1.3 : 0.8}
        />
      );
    });
  }
  return <g>{lines}</g>;
};

const AxisLabel = styled.text`
  font: 700 7px "Liberation Sans", sans-serif;
  fill: ${(p) => p.$c};
`;

const MAIN_MENU = ["文件", "编辑", "创建", "选择", "修改", "显示", "窗口", "网格", "编辑网格", "网格工具", "网格显示", "曲线", "曲面", "变形", "UV", "生成", "缓存", "Substance", "Arnold", "帮助"];
const SHELF_TABS = ["曲线/曲面", "多边形建模", "雕刻", "绑定", "动画", "渲染", "FX", "FX 缓存", "自定义", "Arnold", "Bifrost", "MASH", "运动图形", "XGen"];
const SHELF_GROUPS = [
  { ml: 2, names: ["sphere", "cube", "cylinder", "cone", "torus", "plane", "disc"] },
  { ml: 2, names: ["platonic"] },
  { ml: 0, names: ["star", "type", "svgIcon"] },
  { ml: 1, names: ["ctrl", "history", "freeze"] },
  { ml: 1, names: ["combineC", "combine", "mirror", "smooth", "reduce", "extrude", "bridge", "bevel", "scatter", "wheel", "diag", "merge", "target", "retopo"] },
  { ml: 3, names: ["multicut", "loop", "quad"] },
  { ml: 2, names: ["uvPlane", "uvCyl", "uvSph", "uvAuto", "uvContour", "uvEditor", "uvUnfold", "uvCut"] },
];
const FRAMES = Array.from({ length: 24 }, (_, i) => (i + 1) * 5);

export default function App() {
  return (
    <>
      <GlobalStyle />
      <Window>
        <TitleBar>
          <Icon name="mayaM" size={9} />
          <Title>Autodesk Maya 2019: 无标题*</Title>
          <WindowButton type="button" aria-label="最小化"><Icon name="min" size={9} /></WindowButton>
          <WindowButton type="button" aria-label="最大化"><Icon name="max" size={9} /></WindowButton>
          <WindowButton type="button" aria-label="关闭"><Icon name="close" size={9} /></WindowButton>
        </TitleBar>

        <Bar $h={17} $pr={3}>
          <Menus items={MAIN_MENU} pl={5} />
          <Spacer />
          <Label htmlFor="workspace">工作区:</Label>
          <Choice id="workspace" value="Maya 经典*" $w={108} $ml={5} />
          <Group $ml={3}><IconButton type="button" aria-label="锁定" $w={12}><Icon name="lock" size={11} /></IconButton></Group>
        </Bar>

        <Bar $h={20} $pr={2} $line>
          <Grip $h={16} />
          <Choice label="菜单集" value="建模" $w={65} />
          <Sep $ml={6} />
          <Tools ml={6} names={["newFile", "open", "save", "undo", "redo"]} />
          <Sep $ml={7} />
          <Sep $ml={12} />
          <Tools ml={6} names={["selHier", "selObj", "selComp"]} active="selObj" />
          <Sep $ml={7} />
          <Sep $ml={12} />
          <Tools ml={6} names={["magGrid", "magCurve", "magPoint", "magCenter", "magPlane", "magLive"]} />
          <Group $ml={4}><Caret small /></Group>
          <Field $flat $w={67} $h={14} $ml={4} aria-label="激活曲面" defaultValue="无激活曲面" />
          <Sep $ml={7} />
          <Group $ml={9}><Caret small /></Group>
          <Field $flat $w={66} $h={14} $ml={4} aria-label="对称" defaultValue="对称: 禁用" />
          <Sep $ml={7} />
          <Sep $ml={12} />
          <Tools ml={6} names={["clapEye", "clap", "clapIpr", "clapGear", "ball", "clapTeal", "paintGear", "pause"]} />
          <Sep $ml={8} />
          <Sep $ml={12} />
          <Choice label="帐户" value="登录" plain $w={80} $ml={5}>
            <Group><IconButton as="span" $w={14}><Icon name="user" size={10} /></IconButton></Group>
          </Choice>
          <Spacer />
          <Tools names={["cubePlus", "human", "attrs", "toolset", "layersOn"]} active="layersOn" />
        </Bar>

        <Shelf>
          <Group><Grip $h={42} /></Group>
          <ShelfSide>
            <Icon name="minus" size={8} />
            <Icon name="gear" size={7} />
          </ShelfSide>
          <ShelfBody>
            <TabStrip $h={17} $pt={2} role="tablist">
              {SHELF_TABS.map((t) => (
                <Tab key={t} type="button" role="tab" $active={t === "多边形建模"}>{t}</Tab>
              ))}
            </TabStrip>
            <ShelfRow>
              {SHELF_GROUPS.map(({ ml, names }, i) => (
                <React.Fragment key={names[0]}>
                  {i > 0 && <ShelfSep />}
                  <Tools names={names} w={23} size={18} ml={ml} />
                </React.Fragment>
              ))}
              <Spacer />
              <ShelfScroll><Icon name="scroll" size={10} h={20} box="0 0 20 40" /></ShelfScroll>
            </ShelfRow>
          </ShelfBody>
        </Shelf>

        <Work>
          <ToolBox>
            <DotHandle $w={25} $h={3} />
            <ToolSet $mt={3}>
              <Tools names={["arrow"]} w={24} size={20} active="arrow" />
              {["lasso", "paint", "move", "rotate", "scale"].map((n) => (
                <Tools key={n} names={[n]} w={24} h={25} size={19} />
              ))}
            </ToolSet>
            <Rule />
            <ToolSet $mt={2}>
              {["single", "four", "two", "outliner"].map((n) => (
                <Tools key={n} names={[n]} w={24} h={25} size={19} />
              ))}
            </ToolSet>
            <Spacer />
            <Icon name="mayaM" size={22} />
          </ToolBox>

          <ViewPanel>
            <Bar $h={14}><Menus items={["视图", "着色", "照明", "显示", "渲染器", "面板"]} pl={4} /></Bar>
            <Bar $h={15}>
              <Sep $h={9} />
              <Tools ml={1} w={13} size={11} names={["cam", "camLock", "camBook", "bookmark", "imagePlane", "panZoom", "pencil"]} />
              <Sep $h={9} $ml={1} />
              <Tools ml={1} w={13} size={11} names={["grid", "film", "gateDot", "mask", "field", "safe", "safeT"]} active="grid" />
              <Sep $h={9} $ml={1} />
              <Tools ml={1} w={13} size={11} names={["wire", "shaded", "half", "textured", "dots", "light", "shadow"]} active="shaded" />
              <Sep $h={9} $ml={1} />
              <Tools ml={2} w={13} size={10} names={["ao", "blurIcon", "msaa", "dof"]} />
              <Sep $h={9} $ml={1} />
              <Tools ml={2} w={13} size={10} names={["isolate"]} />
              <Sep $h={9} $ml={1} />
              <Tools ml={2} w={13} size={10} names={["xray", "xray2", "xray3"]} />
              <Sep $h={9} $ml={1} />
              <Tools ml={4} w={13} size={9} names={["exposure"]} />
              <Field $w={25} $h={11} aria-label="曝光" defaultValue="0.00" />
              <Tools ml={2} w={13} size={8} names={["gamma"]} />
              <Field $w={25} $h={11} $ml={1} aria-label="伽马" defaultValue="1.00" />
              <Tools ml={1} w={13} size={12} names={["colorMgmt"]} />
              <Choice label="视图变换" value="sRGB gamma" $w={118} $h={12} $ml={2} />
            </Bar>
            <Canvas>
              <Scene viewBox="0 0 851 466" preserveAspectRatio="xMidYMid meet" aria-hidden="true">
                <GroundGrid />
                <path d="M17 449v-12" stroke="#1fd01f" strokeWidth="1.500" />
                <path d="M17 448l-6 2" stroke="#2020d0" strokeWidth="1.500" />
                <path d="M17 448l6 2" stroke="#d02020" strokeWidth="1.500" />
                <AxisLabel x="15" y="438" $c="#1fd01f">y</AxisLabel>
                <AxisLabel x="8" y="452" $c="#2020e0">z</AxisLabel>
                <AxisLabel x="22" y="452" $c="#e02020">x</AxisLabel>
              </Scene>
              <Hud $at="top" $y={25}>打开大写锁定</Hud>
              <Hud $at="bottom" $y={4}>persp</Hud>
            </Canvas>
          </ViewPanel>

          <SidePanel>
            <Bar $h={15}>
              <Spacer />
              <Tools names={["axis", "speed", "graph"]} w={14} size={10} />
            </Bar>
            <Bar $h={16}><Menus items={["通道", "编辑", "对象", "显示"]} pl={5} /></Bar>
            <ChannelArea />
            <DotHandle $w={57} $h={1} $m="3px auto 4px" />
            <LayerBox>
              <TabStrip $h={14} role="tablist">
                <Tab type="button" role="tab" $tight $active>显示</Tab>
                <Tab type="button" role="tab">动画</Tab>
              </TabStrip>
              <Bar $h={15}><Menus items={["层", "选项", "帮助"]} pl={5} /></Bar>
              <Bar $h={18}>
                <Spacer />
                <Tools names={["layerUp", "layerDown"]} w={16} size={10} />
                <Tools names={["layerNew", "layerSel"]} w={16} size={10} ml={2} />
              </Bar>
              <LayerList />
              <ScrollBar>
                <Icon name="triL" size={7} />
                <ScrollThumb />
                <Spacer />
                <Icon name="triR" size={7} />
              </ScrollBar>
            </LayerBox>
          </SidePanel>
          <SideTabs role="tablist">
            <SideTab type="button" role="tab" $h={73} $active>通道盒/层编辑器</SideTab>
            <SideTab type="button" role="tab" $h={55}>建模工具包</SideTab>
            <SideTab type="button" role="tab" $h={52}>属性编辑器</SideTab>
          </SideTabs>
        </Work>

        <Bottom>
          <Bar $h={28} $line $pr={7}>
            <Grip $h={22} />
            <Track>
              {FRAMES.map((f) => <Tick key={f} $last={f === 120}>{f}</Tick>)}
              <Playhead>1</Playhead>
            </Track>
            <Field $w={58} $ml={4} aria-label="当前帧" defaultValue="1" />
            <Tools ml={5} names={["first", "prevKey", "prevFrame", "playBack", "play", "nextFrame", "nextKey", "last"]} />
          </Bar>
          <Bar $h={26} $line $pr={4}>
            <Grip $h={20} />
            <Field $w={58} $h={18} aria-label="动画开始" defaultValue="1" />
            <Field $w={58} $h={18} $ml={6} aria-label="播放开始" defaultValue="1" />
            <RangeTrack>
              <RangeSpan>
                <span>1</span>
                <span>120</span>
                <RangeInput type="range" min="1" max="120" defaultValue="1" aria-label="范围开始" />
                <RangeInput type="range" min="1" max="120" defaultValue="120" aria-label="范围结束" />
              </RangeSpan>
            </RangeTrack>
            <Field $w={58} $h={18} $ml={5} aria-label="播放结束" defaultValue="120" />
            <Field $w={59} $h={18} $ml={5} aria-label="动画结束" defaultValue="200" />
            <Sep $ml={2} />
            <Group $ml={8}><Caret hollow /></Group>
            <Field $flat $w={68} $ml={4} aria-label="角色集" defaultValue="无角色集" />
            <Group $ml={7}><Caret hollow /></Group>
            <Field $flat $w={68} $ml={4} aria-label="动画层" defaultValue="无动画层" />
            <Sep $ml={6} />
            <Choice label="帧速率" value="24 fps" $w={70} $ml={6} />
            <Tools ml={7} names={["loopPlay"]} />
            <Tools ml={4} names={["cache"]} w={16} active="cache" outlined />
            <Sep $ml={6} />
            <Tools ml={2} names={["autoKey"]} w={19} />
            <Tools names={["runner"]} w={19} />
          </Bar>
          <Bar $h={22} $line $pr={4}>
            <Grip />
            <Mel type="button">MEL</Mel>
            <Field $w={250} aria-label="MEL 命令" />
            <CommandDivider />
            <Field $grow aria-label="命令结果" readOnly />
            <Tools ml={3} names={["script"]} w={14} size={13} />
          </Bar>
          <Bar $h={7}><Grip $h={6} /></Bar>
        </Bottom>
      </Window>
    </>
  );
}
